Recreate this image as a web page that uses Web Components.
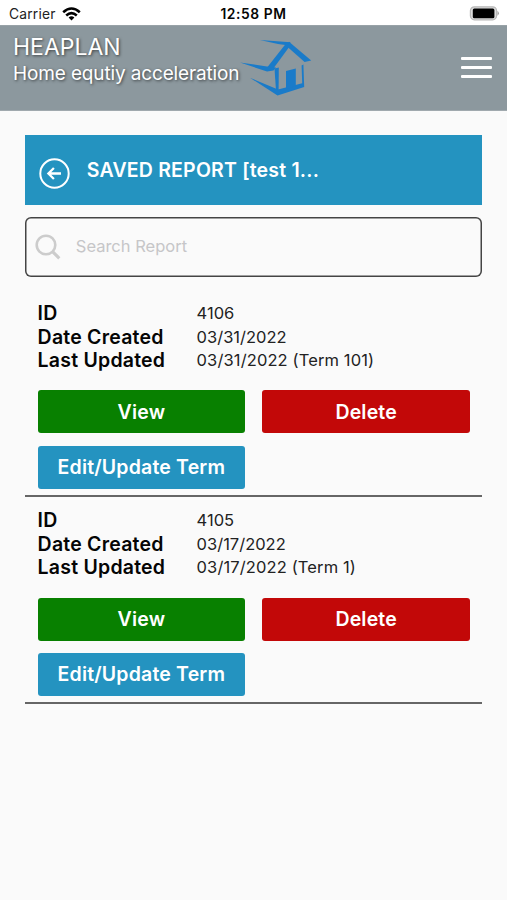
<!DOCTYPE html>
<html lang="en">
<head>
<meta charset="utf-8">
<title>HEAPLAN</title>
<style>
html,body{margin:0;height:100%}
body{background:#fafafa;font-family:Inter,"Liberation Sans",sans-serif;color:#050505;overflow:hidden}
</style>
</head>
<body>
<heaplan-app></heaplan-app>
<script>
const define = (name, html) => customElements.define(name, class extends HTMLElement {
  constructor() {
    super();
    const t = document.createElement('template');
    t.innerHTML = html;
    this.attachShadow({ mode: 'open' }).append(t.content.cloneNode(true));
  }
});

define('status-bar', `
<style>
:host{display:grid;grid-template-columns:1fr auto 1fr;align-items:center;height:25px;padding:2px 7px 0 9px;box-sizing:border-box;background:#fff;font-size:13.8px;line-height:16px}
.left{display:flex;align-items:center;gap:6px}
.left span{letter-spacing:.2px;color:#222}
b{font-weight:600;letter-spacing:.6px;margin-right:2px}
.bat{justify-self:end}
svg{display:block}
</style>
<div class="left"><span>Carrier</span>
<svg width="19" height="14" viewBox="0 0 19 14" fill="none" stroke="#000" stroke-width="2.6"><path d="M1.2 5.2Q9.5-2.2 17.8 5.2"/><path d="M4.2 8.4Q9.5 3.8 14.8 8.4"/><path d="M9.5 13.4L6.6 10.5Q9.5 8.2 12.4 10.5Z" fill="#000" stroke="none"/></svg></div>
<b>12:58 PM</b>
<svg class="bat" width="31" height="15" viewBox="0 0 31 15"><rect x="1.4" y=".8" width="26.2" height="13" rx="4" fill="#dcdcdc" stroke="#b8b8b8" stroke-width="1.2"/><rect x="3.8" y="2.6" width="21.6" height="9.6" rx="1.5" fill="#000"/><path d="M28.5 4.8Q31.2 7.3 28.5 9.8Z" fill="#999"/></svg>`);

define('house-logo', `
<style>:host{display:block}svg{display:block}</style>
<svg width="72" height="56" viewBox="0 0 72 56" fill="#1a7bc9">
<path d="M20 0L50.5 2.2L49 5.4L38 4Z"/>
<path d="M46 3.6L51 4.6L33 29L27.5 27Z"/>
<path d="M49 1.8L71.2 20.5L64.6 22L47 6.4Z"/>
<path d="M0 22.6L27 26.4L36 27.6L33.5 30.4L27 31.4Z"/>
<path d="M34.5 28.6L38.8 27.4L38.6 50.5H36Z"/>
<path d="M10 37.8L38 49.6L62.2 43.2L61.6 25.5L63.4 24.5L64.2 47L37.5 55.4Z"/>
<path d="M46 31L55.8 28.6V46L46 49Z"/></svg>`);

define('app-header', `
<style>
:host{display:flex;align-items:flex-start;height:86px;box-sizing:border-box;padding:9px 15.5px 0 13px;background:#8c989e;border-top:1px solid #98a2a7;border-bottom:1px solid #a0a9ae;color:#fff;text-shadow:1px 1px 3px rgba(0,0,0,.6)}
.t{display:flex;flex-direction:column;white-space:nowrap;width:227px}
.a{font-size:23px;line-height:25px}
.s{font-size:19px;line-height:28px;letter-spacing:-.14px}
house-logo{margin:5px 0 0 0}
.menu{margin:22px 0 0 auto;display:grid;gap:6.2px;width:31px}
.menu i{height:3px;border-radius:1px;background:#fff}
</style>
<div class="t"><span class="a"><slot name="title"></slot></span><span class="s"><slot></slot></span></div>
<house-logo></house-logo>
<div class="menu"><i></i><i></i><i></i></div>`);

define('page-title', `
<style>
:host{display:flex;align-items:center;height:70px;box-sizing:border-box;padding:0 14px;gap:16.5px;background:#2493c0;color:#fff;font-size:19.5px;letter-spacing:.2px;font-weight:600}
svg{margin-top:6px}
span{white-space:nowrap}
</style>
<svg width="31" height="31" viewBox="0 0 31 31" fill="none" stroke="#fff" stroke-width="2"><circle cx="15.5" cy="15.5" r="14.2"/><path d="M22 15.5H10.2M14.9 10L9.4 15.5L14.9 21" stroke-width="2.3"/></svg>
<span><slot></slot></span>`);

define('search-box', `
<style>
:host{display:flex;align-items:center;height:60px;box-sizing:border-box;box-shadow:inset 0 0 0 1.5px #444;border-radius:6px;padding:0 10px;gap:14.5px;color:#c6c6c8;font-size:16.5px}
span{margin-top:-2px}
</style>
<svg width="26" height="26" viewBox="0 0 26 26" fill="none" stroke="#ccc" stroke-width="2.6"><circle cx="11" cy="11" r="9.3"/><path d="M17.8 17.8L24.3 24.3" stroke-width="3.2"/></svg>
<span><slot></slot></span>`);

define('action-button', `
<style>
:host{display:flex;align-items:center;justify-content:center;height:43px;border-radius:3px;background:var(--tone,#2493c0);color:#fff;font-size:19.5px;letter-spacing:.18px;font-weight:600}
</style><span><slot></slot></span>`);

define('report-item', `
<style>
:host{display:block;height:207.2px;box-sizing:border-box;padding:12px 12.3px 0;border-bottom:2px solid #666}
dl{display:grid;grid-template-columns:159px 1fr;grid-auto-rows:23.6px;line-height:23.6px;margin:0 0 17.6px;white-space:nowrap}
dt{font-weight:600;font-size:19.5px;letter-spacing:.22px}
dd{margin:0;font-size:16.5px;color:#222}
slot[name=updated]{letter-spacing:.12px}
.b{display:grid;grid-template-columns:207.6px 207.6px;column-gap:17.2px;row-gap:12.3px}
</style>
<dl><dt>ID</dt><dd><slot name="id"></slot></dd><dt>Date Created</dt><dd><slot name="created"></slot></dd><dt>Last Updated</dt><dd><slot name="updated"></slot></dd></dl>
<div class="b"><action-button style="--tone:#088000">View</action-button><action-button style="--tone:#c20808">Delete</action-button><action-button>Edit/Update Term</action-button></div>`);

define('heaplan-app', `
<style>
:host{display:block}
main{display:flex;flex-direction:column;padding:24.3px 24.7px 0 25.3px}
search-box{margin:12px 0 12.7px}
</style>
<status-bar></status-bar>
<app-header><span slot="title">HEAPLAN</span>Home equtiy acceleration</app-header>
<main>
<page-title>SAVED REPORT [test 1...</page-title>
<search-box>Search Report</search-box>
<report-item><span slot="id">4106</span><span slot="created">03/31/2022</span><span slot="updated">03/31/2022 (Term 101)</span></report-item>
<report-item><span slot="id">4105</span><span slot="created">03/17/2022</span><span slot="updated">03/17/2022 (Term 1)</span></report-item>
</main>`);
</script>
</body>
</html>
